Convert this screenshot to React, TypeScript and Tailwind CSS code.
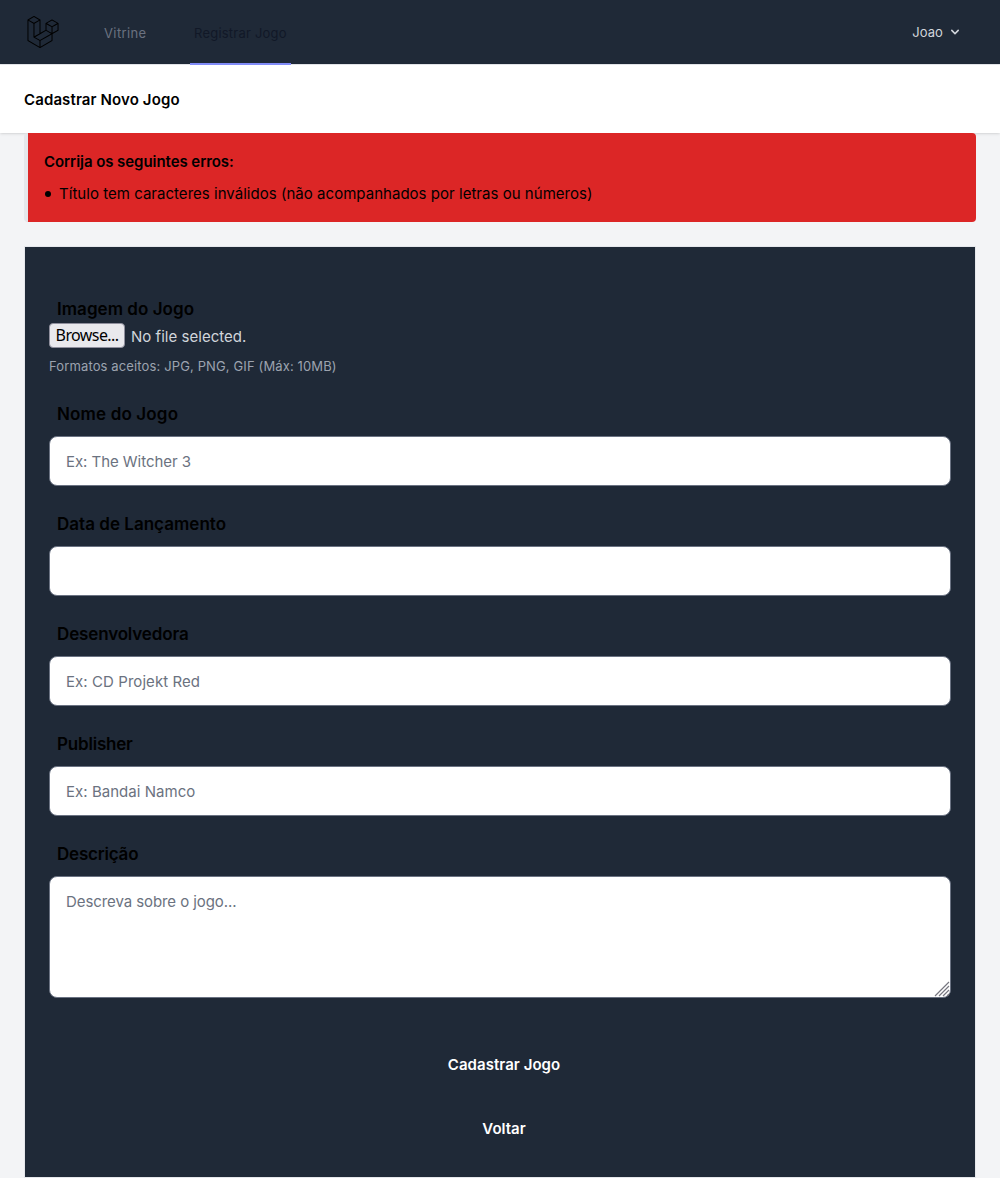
import { SiLaravel } from 'react-icons/si';

function Field({ label, labelClass, placeholder, textClass }: { label: string; labelClass: string; placeholder?: string; textClass?: string }) {
  return (
    <div className="mb-6">
      <label className={`mb-2 block h-[28px] pl-2 text-[17px] leading-[28px] font-semibold text-black ${labelClass}`}>{label}</label>
      <input
        type="text"
        placeholder={placeholder}
        className={`block h-[50px] w-full rounded-lg border border-gray-500 bg-white px-4 text-[15px] placeholder:text-[#6b7280] ${textClass ?? ''}`}
      />
    </div>
  );
}

export default function App() {
  return (
    <div className="h-[1178px] overflow-hidden bg-[#f3f4f6] font-['Inter',sans-serif] text-black">
      <nav className="flex h-[65px] items-start border-b border-[#e5e7eb] bg-[#1f2937] pl-[27px]">
        <SiLaravel className="mt-4 size-8 text-black" />
        <a className="ml-[45px] flex h-[65px] w-[43px] items-center text-[13px] tracking-[0.38px] text-[#6b7280]"><span className="pt-[3px]">Vitrine</span></a>
        <a className="ml-[43px] flex h-[65px] w-[101px] items-center border-b-2 border-[#818cf8] pl-1 text-[13px] tracking-[0.22px] whitespace-nowrap text-[#111827]"><span className="pt-[5px]">Registrar Jogo</span></a>
        <button className="ml-auto mr-[37px] flex h-16 items-center text-[13px] tracking-[0.1px] text-[#d1d5db]">
          <span className="pt-[2px]">Joao</span>
          <svg className="ml-1 size-4" viewBox="0 0 20 20" fill="currentColor">
            <path fillRule="evenodd" clipRule="evenodd" d="M5.293 7.293a1 1 0 011.414 0L10 10.586l3.293-3.293a1 1 0 111.414 1.414l-4 4a1 1 0 01-1.414 0l-4-4a1 1 0 010-1.414z" />
          </svg>
        </button>
      </nav>
      <header className="flex h-[68px] items-center bg-white px-6 shadow">
        <h2 className="pt-[2px] text-[15px] font-semibold tracking-[0.12px]">Cadastrar Novo Jogo</h2>
      </header>
      <main className="px-6">
        <div className="h-[89px] rounded border-l-4 border-[#e5e7eb] bg-[#dc2626] px-4 pt-[17px]">
          <p className="text-[15px] leading-6 font-semibold tracking-[-0.06px]">Corrija os seguintes erros:</p>
          <ul className="mt-2 text-[15px] leading-6 tracking-[0.03px]">
            <li className="flex items-center"><span className="mr-2 ml-[1px] size-1.5 rounded-full bg-black" /><span>Título tem caracteres inválidos (não acompanhados por letras ou números)</span></li>
          </ul>
        </div>
        <form className="mt-6 h-[932px] border border-[#e5e7eb] bg-[#1f2937] px-6 pt-12">
          <label className="block h-[28px] pl-2 text-[17px] leading-[28px] font-semibold tracking-[0.04px]">Imagem do Jogo</label>
          <div className="flex h-[25px] items-center">
            <button type="button" className="h-[25px] w-[76px] rounded-[4px] border border-[#8f8f9d] bg-[#e9e9ed] font-['Noto_Sans',sans-serif] text-[16px] leading-[21px] tracking-[-0.6px] text-black">Browse...</button>
            <span className="ml-1.5 pt-[3px] text-[15px] tracking-[0.03px] text-[#d1d5db]">No file selected.</span>
          </div>
          <p className="mt-2 mb-6 text-[13px] leading-5 tracking-[0.13px] text-[#9ca3af]">Formatos aceitos: JPG, PNG, GIF (Máx: 10MB)</p>
          <Field label="Nome do Jogo" labelClass="tracking-[0.15px]" placeholder="Ex: The Witcher 3" textClass="tracking-[-0.05px]" />
          <Field label="Data de Lançamento" labelClass="tracking-[0.02px]" />
          <Field label="Desenvolvedora" labelClass="tracking-[-0.14px]" placeholder="Ex: CD Projekt Red" textClass="tracking-[0.07px]" />
          <Field label="Publisher" labelClass="tracking-[-0.2px]" placeholder="Ex: Bandai Namco" textClass="tracking-[0.04px]" />
          <label className="mb-2 block h-[28px] pl-2 text-[17px] leading-[28px] font-semibold tracking-[-0.2px]">Descrição</label>
          <div className="relative">
            <textarea placeholder="Descreva sobre o jogo..." className="block h-[122px] w-full resize-none rounded-lg border border-gray-500 bg-white px-4 py-[13px] text-[15px] leading-6 tracking-[-0.08px] placeholder:text-[#6b7280]" />
            <svg className="absolute right-px bottom-px size-4" viewBox="0 0 16 16" stroke="#777780" strokeWidth="1.2">
              <path d="M1 15L15 1M5 15L15 5M9 15L15 9M13 15L15 13" />
            </svg>
          </div>
          <div className="mt-[55px] flex flex-col items-center gap-10 pl-2 text-[15px] leading-6 font-semibold text-white">
            <button type="button" className="tracking-[0.05px]">Cadastrar Jogo</button>
            <a>Voltar</a>
          </div>
        </form>
      </main>
    </div>
  );
}
